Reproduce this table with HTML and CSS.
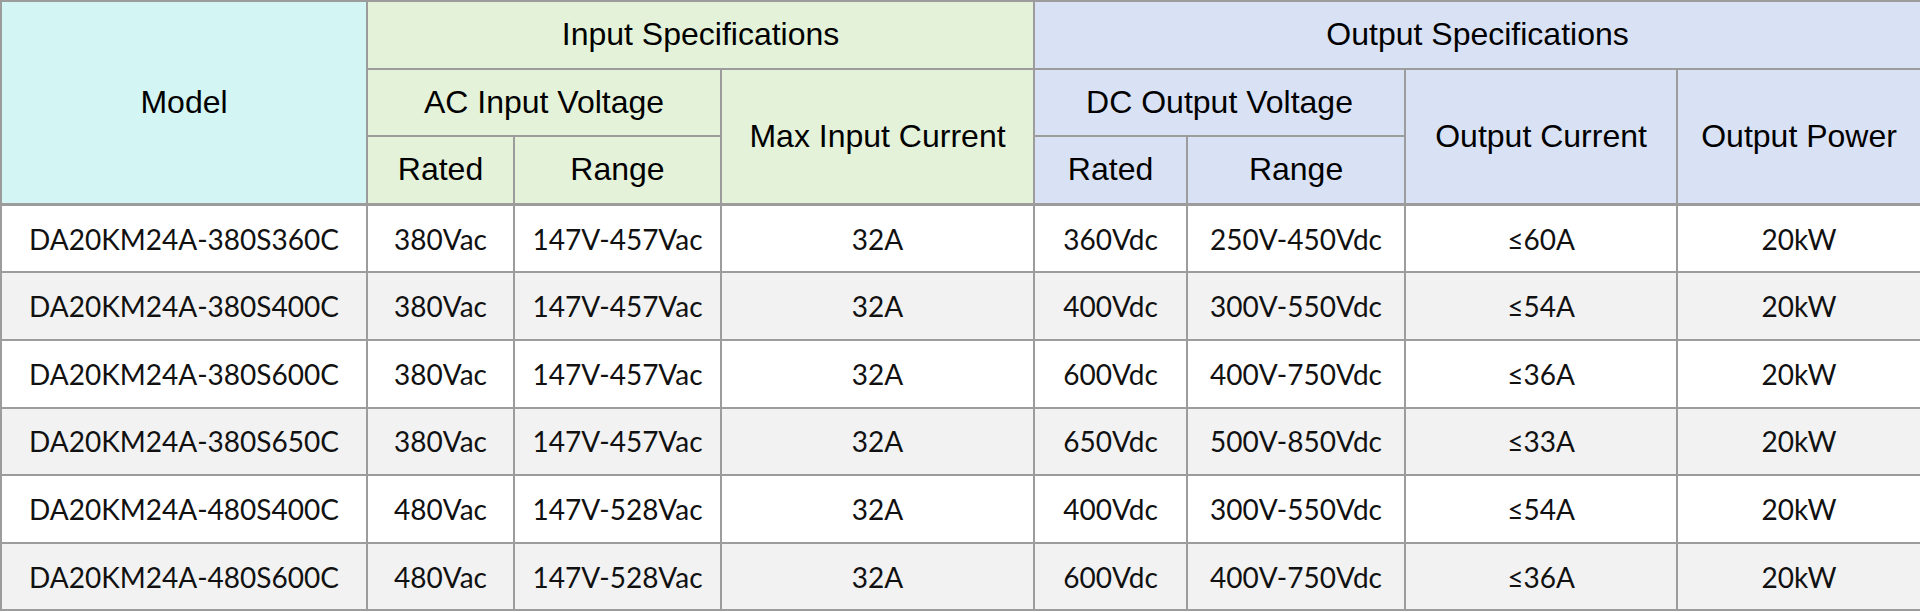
FILE: index.html
```html
<!DOCTYPE html>
<html>
<head>
<meta charset="utf-8">
<link rel="stylesheet" href="styles.css">
</head>
<body>
<table class="spec">
  <colgroup>
    <col class="c-model"><col class="c-rated"><col class="c-range"><col class="c-maxin">
    <col class="c-orated"><col class="c-orange"><col class="c-ocur"><col class="c-opow">
  </colgroup>
  <thead>
    <tr>
      <th rowspan="3" class="h-model">Model</th>
      <th colspan="3" class="h-in">Input Specifications</th>
      <th colspan="4" class="h-out">Output Specifications</th>
    </tr>
    <tr>
      <th colspan="2" class="h-in">AC Input Voltage</th>
      <th rowspan="2" class="h-in">Max Input Current</th>
      <th colspan="2" class="h-out">DC Output Voltage</th>
      <th rowspan="2" class="h-out">Output Current</th>
      <th rowspan="2" class="h-out">Output Power</th>
    </tr>
    <tr>
      <th class="h-in">Rated</th>
      <th class="h-in">Range</th>
      <th class="h-out">Rated</th>
      <th class="h-out">Range</th>
    </tr>
  </thead>
  <tbody>
    <tr><td>DA20KM24A-380S360C</td><td>380Vac</td><td>147V-457Vac</td><td>32A</td><td>360Vdc</td><td>250V-450Vdc</td><td>≤60A</td><td>20kW</td></tr>
    <tr><td>DA20KM24A-380S400C</td><td>380Vac</td><td>147V-457Vac</td><td>32A</td><td>400Vdc</td><td>300V-550Vdc</td><td>≤54A</td><td>20kW</td></tr>
    <tr><td>DA20KM24A-380S600C</td><td>380Vac</td><td>147V-457Vac</td><td>32A</td><td>600Vdc</td><td>400V-750Vdc</td><td>≤36A</td><td>20kW</td></tr>
    <tr><td>DA20KM24A-380S650C</td><td>380Vac</td><td>147V-457Vac</td><td>32A</td><td>650Vdc</td><td>500V-850Vdc</td><td>≤33A</td><td>20kW</td></tr>
    <tr><td>DA20KM24A-480S400C</td><td>480Vac</td><td>147V-528Vac</td><td>32A</td><td>400Vdc</td><td>300V-550Vdc</td><td>≤54A</td><td>20kW</td></tr>
    <tr><td>DA20KM24A-480S600C</td><td>480Vac</td><td>147V-528Vac</td><td>32A</td><td>600Vdc</td><td>400V-750Vdc</td><td>≤36A</td><td>20kW</td></tr>
  </tbody>
</table>
</body>
</html>
```
FILE: styles.css
```css
html, body {
  margin: 0;
  padding: 0;
  background: #ffffff;
}
.spec {
  width: 1920px;
  border-collapse: collapse;
  table-layout: fixed;
}
.c-model { width: 366px; }
.c-rated { width: 147px; }
.c-range { width: 207px; }
.c-maxin { width: 313px; }
.c-orated { width: 153px; }
.c-orange { width: 218px; }
.c-ocur { width: 272px; }
.c-opow { width: 244px; }

.spec th, .spec td {
  border: 2px solid #9c9c9c;
  padding: 0;
  text-align: center;
  vertical-align: middle;
  height: 65.6px;
  color: #111;
}
.spec th {
  font-family: "Liberation Sans", Arial, sans-serif;
  font-weight: normal;
  font-size: 32px;
  color: #000;
}
.spec thead tr:last-child th,
.spec th[rowspan="3"],
.spec th[rowspan="2"] {
  border-bottom: 3px solid #9c9c9c;
}
.spec td {
  font-family: Lato, "Open Sans", sans-serif;
  font-size: 28px;
}
.h-model { background: #d3f5f3; }
.h-in { background: #e4f2d9; }
.h-out { background: #d9e2f4; }
.spec tbody tr:nth-child(even) td { background: #f2f2f2; }
.spec tbody tr:nth-child(odd) td { background: #ffffff; }
```
